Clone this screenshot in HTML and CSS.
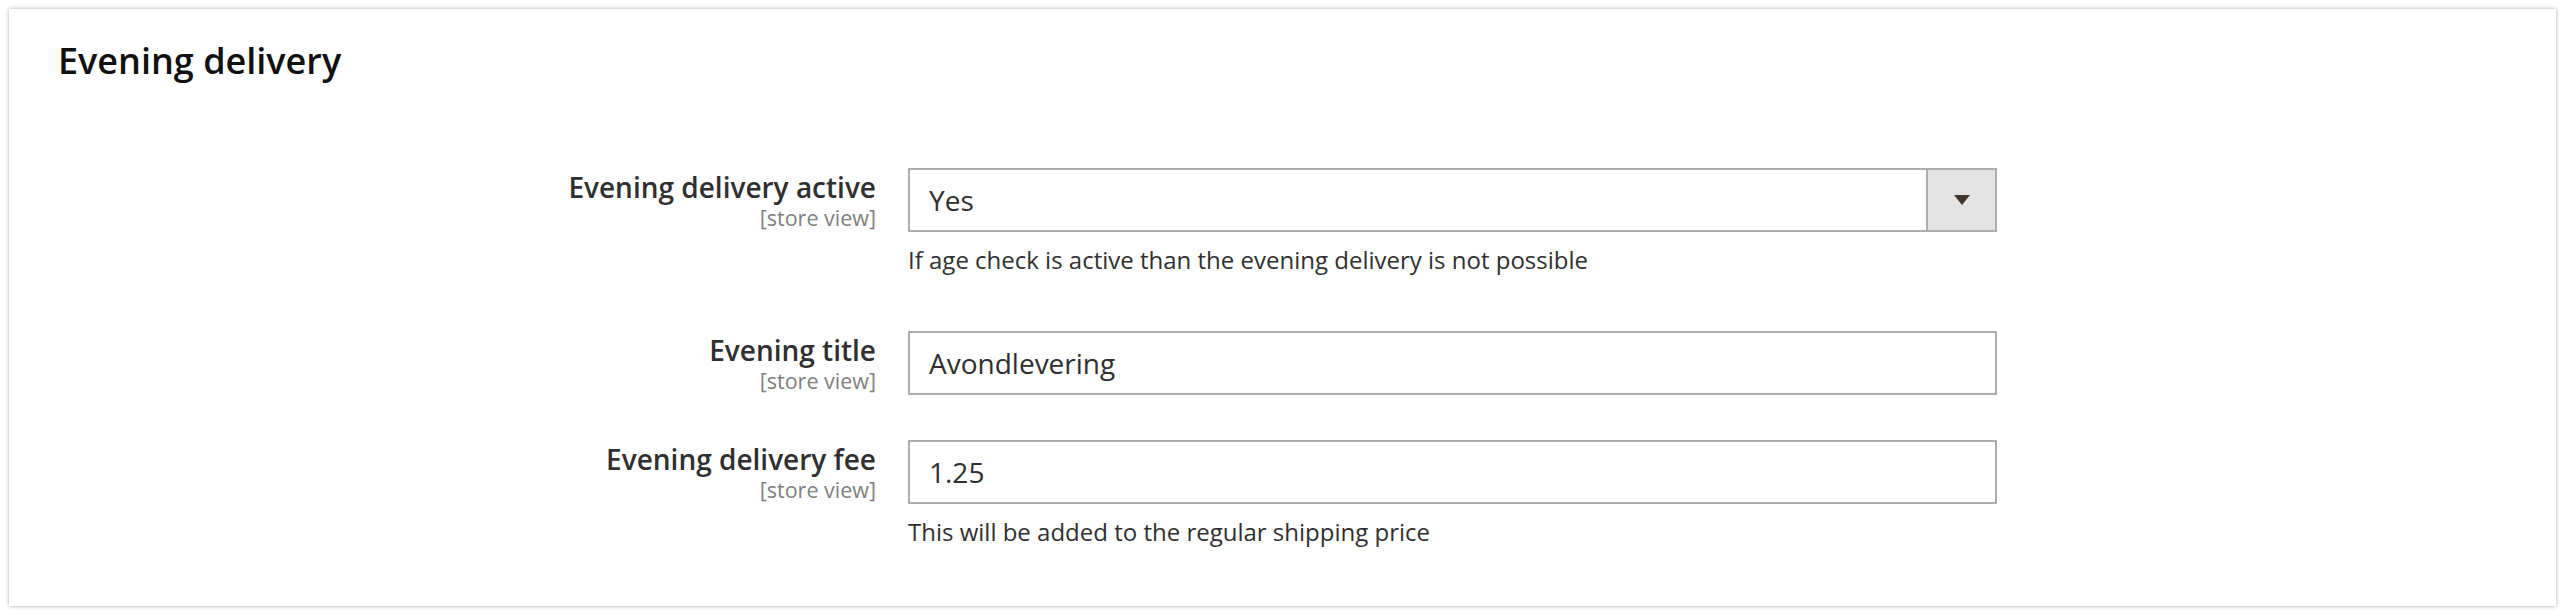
FILE: index.html
```html
<!DOCTYPE html>
<html lang="en">
<head>
<meta charset="utf-8">
<title>Evening delivery</title>
<link rel="stylesheet" href="styles.css">
</head>
<body>
<section class="card">
  <h2 class="card-title">Evening delivery</h2>
  <div class="fields">
    <div class="field">
      <div class="field-label">
        <span class="label-text">Evening delivery active</span>
        <span class="scope">[store view]</span>
      </div>
      <div class="field-control">
        <div class="select">
          <span class="select-value">Yes</span>
          <span class="select-button"><span class="arrow"></span></span>
        </div>
        <p class="note">If age check is active than the evening delivery is not possible</p>
      </div>
    </div>
    <div class="field">
      <div class="field-label">
        <span class="label-text">Evening title</span>
        <span class="scope">[store view]</span>
      </div>
      <div class="field-control">
        <div class="input">Avondlevering</div>
      </div>
    </div>
    <div class="field">
      <div class="field-label">
        <span class="label-text">Evening delivery fee</span>
        <span class="scope">[store view]</span>
      </div>
      <div class="field-control">
        <div class="input">1.25</div>
        <p class="note">This will be added to the regular shipping price</p>
      </div>
    </div>
  </div>
</section>
</body>
</html>
```
FILE: styles.css
```css
html, body {
  margin: 0;
  background: #ffffff;
}
body {
  padding: 9px 10px 10px 9px;
  font-family: "Open Sans", "Noto Sans", sans-serif;
  color: #303030;
}
.card {
  background: #ffffff;
  box-shadow: 0 0 4px rgba(0, 0, 0, 0.35);
  padding: 30px 49px 48px;
}
.card-title {
  margin: 0 0 85px;
  font-size: 36px;
  line-height: 44px;
  font-weight: 600;
  color: #111111;
}
.fields {
  display: flex;
  flex-direction: column;
  gap: 45px;
}
.field {
  display: grid;
  grid-template-columns: 818px 1089px;
  column-gap: 32px;
}
.field-label {
  display: flex;
  flex-direction: column;
  align-items: flex-end;
  text-align: right;
  padding-top: 2px;
}
.label-text {
  font-size: 28px;
  line-height: 34px;
  font-weight: 600;
  color: #303030;
}
.scope {
  margin-top: 1px;
  font-size: 21.5px;
  line-height: 26px;
  color: #808080;
}
.field-control {
  display: flex;
  flex-direction: column;
}
.select, .input {
  box-sizing: border-box;
  height: 64px;
  border: 2px solid #adadad;
  background: #ffffff;
  font-size: 28px;
  color: #303030;
}
.input {
  display: flex;
  align-items: center;
  padding: 0 19px;
}
.select {
  display: flex;
  align-items: stretch;
}
.select-value {
  flex: 1;
  display: flex;
  align-items: center;
  padding: 0 19px;
}
.select-button {
  width: 67px;
  border-left: 2px solid #adadad;
  background: #e3e3e3;
  display: flex;
  align-items: center;
  justify-content: center;
}
.arrow {
  width: 0;
  height: 0;
  border-left: 8px solid transparent;
  border-right: 8px solid transparent;
  border-top: 10px solid #41362f;
}
.note {
  margin: 12px 0 10px;
  font-size: 24px;
  line-height: 32px;
  color: #303030;
}
```
